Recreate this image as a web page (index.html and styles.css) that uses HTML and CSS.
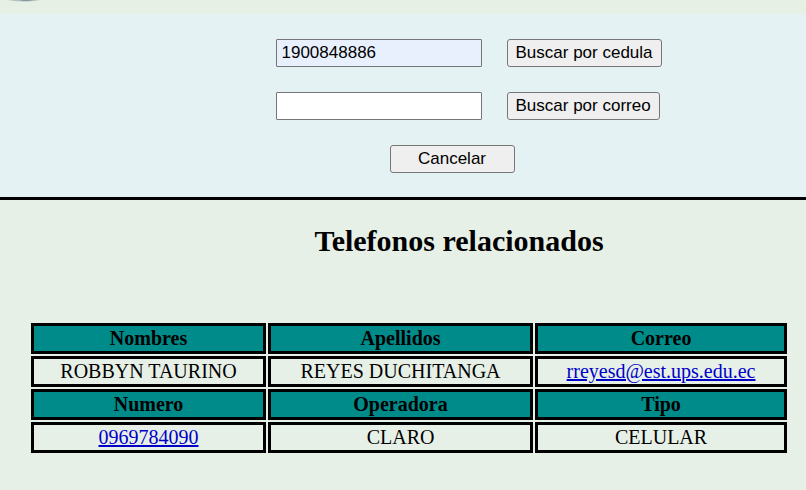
FILE: index.html
```html
<!DOCTYPE html>
<html lang="es">
<head>
<meta charset="utf-8">
<title>Telefonos relacionados</title>
<link rel="stylesheet" href="styles.css">
</head>
<body>
<header class="top">
  <svg class="logo" width="40" height="2" viewBox="0 0 40 2" aria-hidden="true"><path d="M4 0H36Q20 3 4 0Z" fill="#b4c0c3"/><path d="M15 0H29Q22 2 15 0Z" fill="#81919b"/></svg>
</header>
<form class="search">
  <div class="row">
    <input class="field filled" type="text" value="1900848886" aria-label="Cedula">
    <button class="btn" type="button">Buscar por cedula</button>
  </div>
  <div class="row">
    <input class="field" type="text" aria-label="Correo">
    <button class="btn" type="button">Buscar por correo</button>
  </div>
  <div class="actions">
    <button class="btn cancel" type="reset">Cancelar</button>
  </div>
</form>
<main>
  <h1 class="title">Telefonos relacionados</h1>
  <table class="phones">
    <colgroup><col class="first"><col class="second"><col class="third"></colgroup>
    <tbody>
      <tr><th>Nombres</th><th>Apellidos</th><th>Correo</th></tr>
      <tr><td>ROBBYN TAURINO</td><td>REYES DUCHITANGA</td><td><a href="mailto:rreyesd@est.ups.edu.ec">rreyesd@est.ups.edu.ec</a></td></tr>
      <tr><th>Numero</th><th>Operadora</th><th>Tipo</th></tr>
      <tr><td><a href="tel:0969784090">0969784090</a></td><td>CLARO</td><td>CELULAR</td></tr>
    </tbody>
  </table>
</main>
</body>
</html>
```
FILE: styles.css
```css
* { box-sizing: border-box; }
body {
  margin: 0;
  background: #e7f0e7;
  color: #000;
  font-family: "Liberation Serif", "Times New Roman", serif;
  font-size: 20px;
}
.top { height: 14px; background: #e6f0e5; }
.logo { display: block; margin-left: 4px; }
.search {
  display: flex;
  flex-direction: column;
  align-items: center;
  gap: 25px;
  padding: 25px 0 24px 130px;
  background: #e4f2f4;
  border-bottom: 3px solid #000;
}
.row {
  display: flex;
  gap: 25px;
  width: 385px;
}
.field, .btn {
  height: 28px;
  border: 1px solid #767676;
  font-family: "Liberation Sans", Arial, sans-serif;
  font-size: 17px;
  color: #000;
}
.field {
  width: 206px;
  padding: 0 5px;
  border-radius: 1px;
  background: #fff;
}
.filled { background: #e8f0fe; }
.btn {
  padding: 0 8px;
  border-radius: 3px;
  background: #efefef;
  white-space: nowrap;
}
.actions {
  width: 385px;
  padding-left: 114px;
  display: flex;
}
.cancel { width: 125px; }
.title {
  margin: 23px 0 63px;
  padding-left: 112px;
  font-size: 30px;
  line-height: 35px;
  text-align: center;
}
.phones {
  width: calc(100% - 46px);
  margin-left: 29px;
  border-spacing: 2px;
  table-layout: fixed;
  text-align: center;
}
.first { width: 31.25%; }
.second { width: 35.25%; }
.phones th, .phones td {
  height: 31px;
  padding: 1px;
  border: 3px solid #000;
  line-height: 23px;
}
.phones th { background: #008b8b; }
.phones a { color: #0000c8; }
```
